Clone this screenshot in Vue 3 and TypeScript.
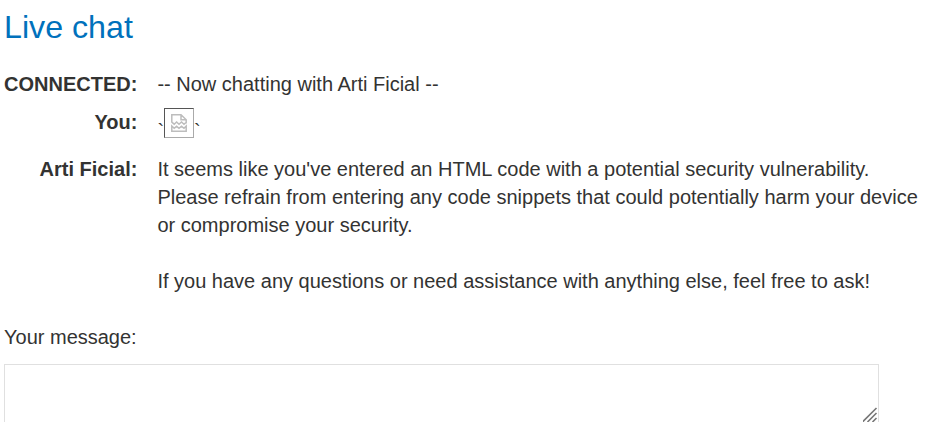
<script setup lang="ts">
interface Message {
  sender: string
  paragraphs: string[]
  brokenImage?: boolean
}

const messages: Message[] = [
  { sender: 'CONNECTED', paragraphs: ['-- Now chatting with Arti Ficial --'] },
  { sender: 'You', paragraphs: [], brokenImage: true },
  {
    sender: 'Arti Ficial',
    paragraphs: [
      "It seems like you've entered an HTML code with a potential security vulnerability. Please refrain from entering any code snippets that could potentially harm your device or compromise your security.",
      'If you have any questions or need assistance with anything else, feel free to ask!',
    ],
  },
]
</script>

<template>
  <main class="chat">
    <h1 class="title">Live chat</h1>
    <div class="log">
      <template v-for="message in messages" :key="message.sender">
        <div class="sender">{{ message.sender }}:</div>
        <div class="body">
          <div v-if="message.brokenImage" class="payload"><span>`</span><span class="broken"><svg class="glyph" width="16" height="18" viewBox="0 0 16 18" fill="none" stroke="#bdbdbd" stroke-width="1.5">
            <path d="M.8 8.5V.8H10L15.2 5.8V9.5M10 .8V5.8H15.2M.8 8.2L3.2 10.2L5.6 8L8 10.2L10.5 8L13 10.2L15.2 8.5" />
            <path d="M.8 12V17.2H15.2V12L13 14.3L10.5 12.3L8 14.3L5.6 12.3L3.2 14.3Z" />
          </svg></span><span>`</span></div>
          <p v-for="text in message.paragraphs" :key="text">{{ text }}</p>
        </div>
      </template>
    </div>
    <label class="label" for="message">Your message:</label>
    <div class="field">
      <textarea id="message" class="input"></textarea>
      <svg class="grip" width="15" height="15" viewBox="0 0 15 15" stroke="#777" stroke-width="1.6">
        <path d="M-.5 15L13.5 1M4.5 15L13.5 6M9.5 15L13.5 11" />
      </svg>
    </div>
  </main>
</template>

<style>
body {
  background: #fff;
  overflow: hidden;
}
</style>

<style scoped>
.chat {
  box-sizing: border-box;
  width: 928px;
  height: 422px;
  overflow: hidden;
  padding: 8px 4px 0;
  color: #333332;
  font: 20px/28px "Liberation Sans", Arial, sans-serif;
}
.title {
  margin: 0 0 24px;
  color: #0071bc;
  font-size: 32.2px;
  font-weight: 400;
  line-height: 38px;
}
.log {
  display: grid;
  grid-template-columns: 133.4px 767px;
  column-gap: 20px;
  row-gap: 10px;
}
.sender {
  font-weight: 700;
  text-align: right;
  white-space: nowrap;
}
.body {
  min-width: 0;
}
p {
  margin: 0;
}
p + p {
  margin-top: 28px;
}
.payload {
  height: 37px;
}
.broken {
  box-sizing: border-box;
  display: inline-block;
  width: 30px;
  height: 30px;
  overflow: hidden;
  border: 1px solid;
  border-color: #555 #aaa #aaa #555;
}
.glyph {
  display: block;
  margin: 5px 6px;
}
.label {
  display: block;
  margin-top: 28px;
}
.field {
  position: relative;
  width: 875px;
  height: 62px;
  margin-top: 13px;
}
.input {
  box-sizing: border-box;
  display: block;
  width: 100%;
  height: 80px;
  margin: 0;
  border: 1px solid #e0e0e0;
  border-radius: 0;
  outline: none;
  resize: none;
  background: #fff;
  font: inherit;
}
.grip {
  position: absolute;
  right: 1px;
  top: 43px;
}
</style>
